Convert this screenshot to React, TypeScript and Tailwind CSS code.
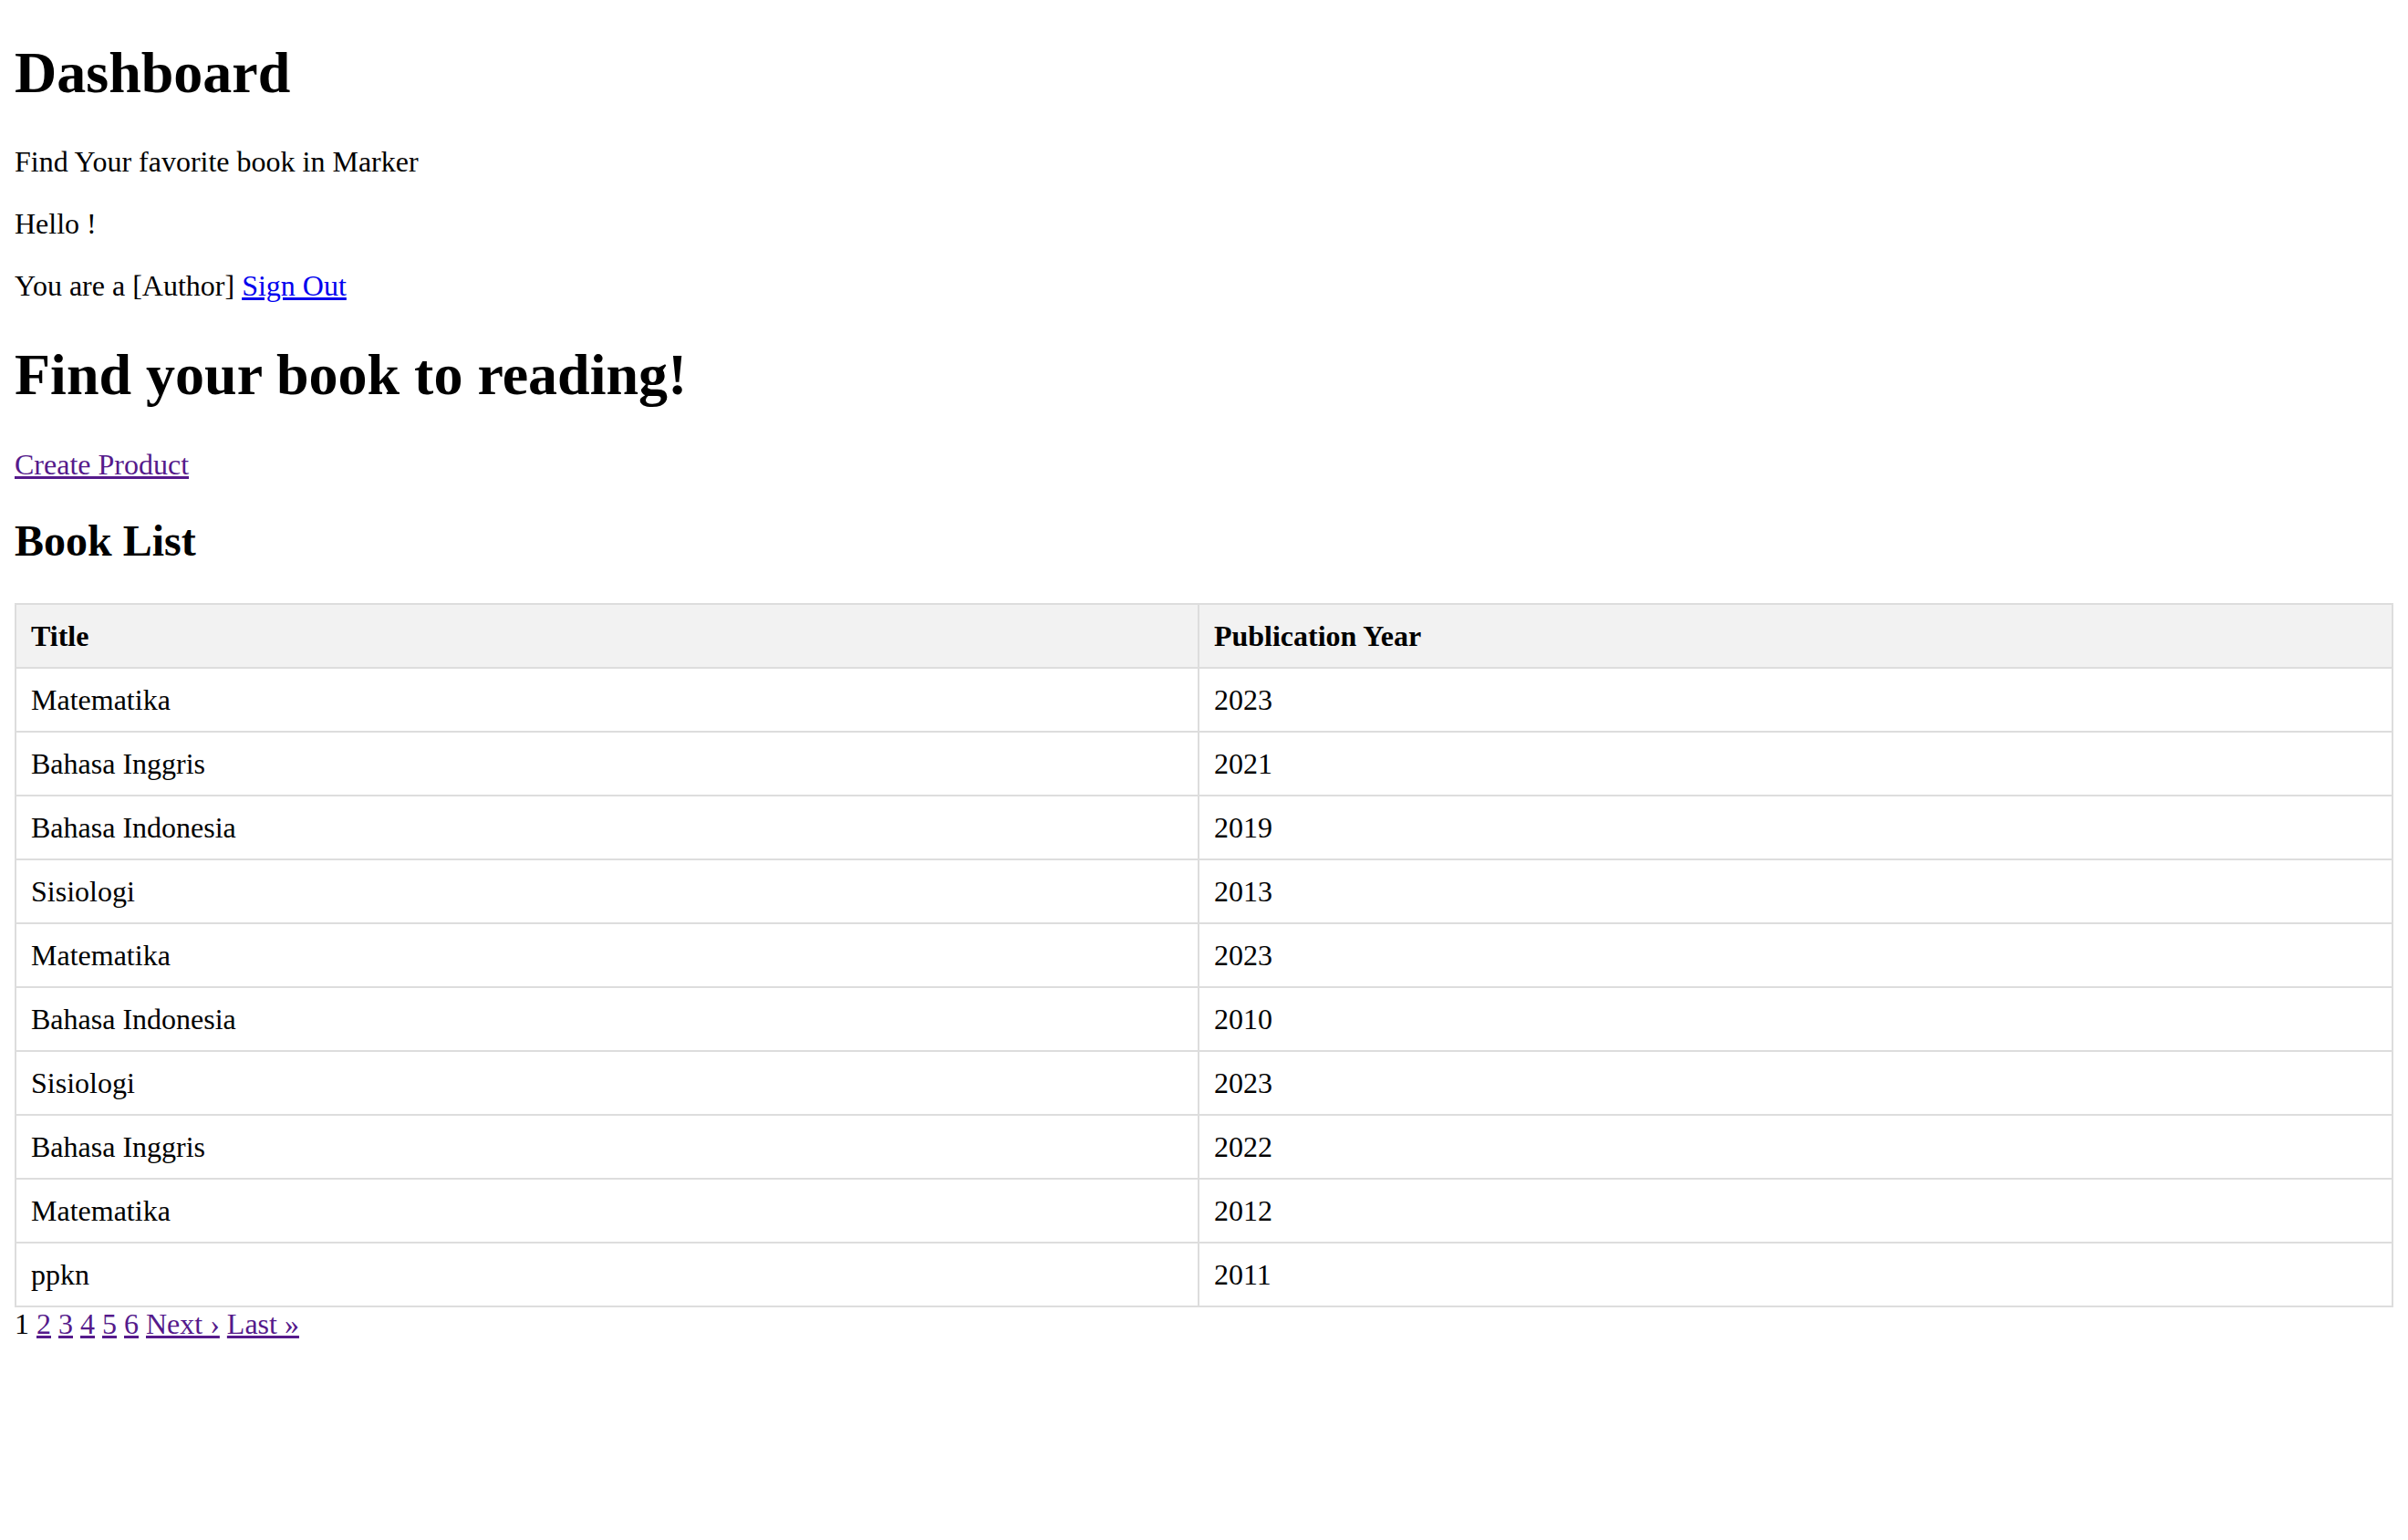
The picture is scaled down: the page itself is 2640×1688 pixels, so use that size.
const books = [
  { title: "Matematika", year: 2023 },
  { title: "Bahasa Inggris", year: 2021 },
  { title: "Bahasa Indonesia", year: 2019 },
  { title: "Sisiologi", year: 2013 },
  { title: "Matematika", year: 2023 },
  { title: "Bahasa Indonesia", year: 2010 },
  { title: "Sisiologi", year: 2023 },
  { title: "Bahasa Inggris", year: 2022 },
  { title: "Matematika", year: 2012 },
  { title: "ppkn", year: 2011 },
];

const pages = ["2", "3", "4", "5", "6"];

// plain browser-default look, rendered at 2x
const cell = "border-2 border-[#dddddd] p-[16px] text-left";

export default function App() {
  return (
    <div className="min-h-screen bg-white px-[16px] pb-[16px] font-['Liberation_Serif','Times_New_Roman',serif] text-[32px] leading-[36px] text-black">
      <h1 className="my-[42.88px] text-[64px] leading-[73.6px] font-bold">Dashboard</h1>
      <p className="my-[32px]">Find Your favorite book in Marker</p>
      <p className="my-[32px]">Hello !</p>
      <p className="my-[32px]">
        You are a [Author]{" "}
        <a href="#" className="text-[#0000ee] underline">
          Sign Out
        </a>
      </p>
      <h1 className="my-[42.88px] text-[64px] leading-[73.6px] font-bold">Find your book to reading!</h1>
      <p className="my-[32px]">
        <a href="#" className="text-[#551a8b] underline">
          Create Product
        </a>
      </p>
      <h2 className="mt-[38px] mb-[39.84px] text-[48px] leading-[55.2px] font-bold">Book List</h2>
      <table className="mt-[41px] w-full border-collapse border-2 border-[#dddddd]">
        <thead>
          <tr className="bg-[#f2f2f2]">
            <th className={`${cell} font-bold`}>Title</th>
            <th className={`${cell} font-bold`}>Publication Year</th>
          </tr>
        </thead>
        <tbody>
          {books.map((b, i) => (
            <tr key={i}>
              <td className={cell}>{b.title}</td>
              <td className={cell}>{b.year}</td>
            </tr>
          ))}
        </tbody>
      </table>
      <div>
        1{" "}
        {pages.map((p) => (
          <span key={p}>
            <a href="#" className="text-[#551a8b] underline">
              {p}
            </a>{" "}
          </span>
        ))}
        <a href="#" className="text-[#551a8b] underline">
          Next ›
        </a>{" "}
        <a href="#" className="text-[#551a8b] underline">
          Last »
        </a>
      </div>
    </div>
  );
}
